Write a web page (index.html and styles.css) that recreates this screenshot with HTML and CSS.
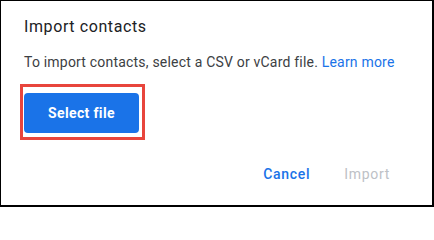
FILE: index.html
```html
<!DOCTYPE html>
<html>
<head>
<meta charset="utf-8">
<link rel="stylesheet" href="styles.css">
</head>
<body>
<div class="dialog">
  <h1 class="title">Import contacts</h1>
  <p class="desc">To import contacts, select a CSV or vCard file. <a class="link" href="#">Learn more</a></p>
  <div class="highlight">
    <button class="primary">Select file</button>
  </div>
  <div class="actions">
    <button class="text-btn">Cancel</button>
    <button class="text-btn disabled">Import</button>
  </div>
</div>
</body>
</html>
```
FILE: styles.css
```css
html, body {
  margin: 0;
  padding: 0;
  background: #fff;
}
.dialog {
  box-sizing: border-box;
  width: 434px;
  height: 207px;
  border-left: 1px solid #000;
  border-top: 1px solid #000;
  border-right: 2px solid #000;
  border-bottom: 2px solid #000;
  font-family: Roboto, "Liberation Sans", sans-serif;
  display: flex;
  flex-direction: column;
}
.title {
  margin: 14px 0 0 23px;
  font-size: 16px;
  line-height: 24px;
  font-weight: 400;
  color: #202124;
  letter-spacing: 0.6px;
}
.desc {
  margin: 13px 0 0 23px;
  font-size: 14px;
  line-height: 20px;
  color: #3c4043;
  letter-spacing: 0.2px;
}
.link {
  color: #1a73e8;
  text-decoration: none;
}
.highlight {
  align-self: flex-start;
  margin: 12px 0 0 19px;
  border: 3px solid #e8453c;
  padding: 6px 3px 4px 1px;
}
.primary {
  display: block;
  width: 115px;
  height: 40px;
  border: 0;
  border-radius: 4px;
  background: #1a73e8;
  color: #fff;
  font-family: Roboto, "Liberation Sans", sans-serif;
  font-size: 14px;
  font-weight: 700;
  letter-spacing: 0.35px;
}
.actions {
  display: flex;
  justify-content: flex-end;
  margin: 16px 26px 0 0;
  gap: 2px;
}
.text-btn {
  height: 36px;
  padding: 0 16px;
  border: 0;
  background: transparent;
  color: #1a73e8;
  font-family: Roboto, "Liberation Sans", sans-serif;
  font-size: 14px;
  font-weight: 500;
  letter-spacing: 0.7px;
}
.text-btn.disabled {
  color: #bdc1c6;
  font-weight: 400;
}
```
